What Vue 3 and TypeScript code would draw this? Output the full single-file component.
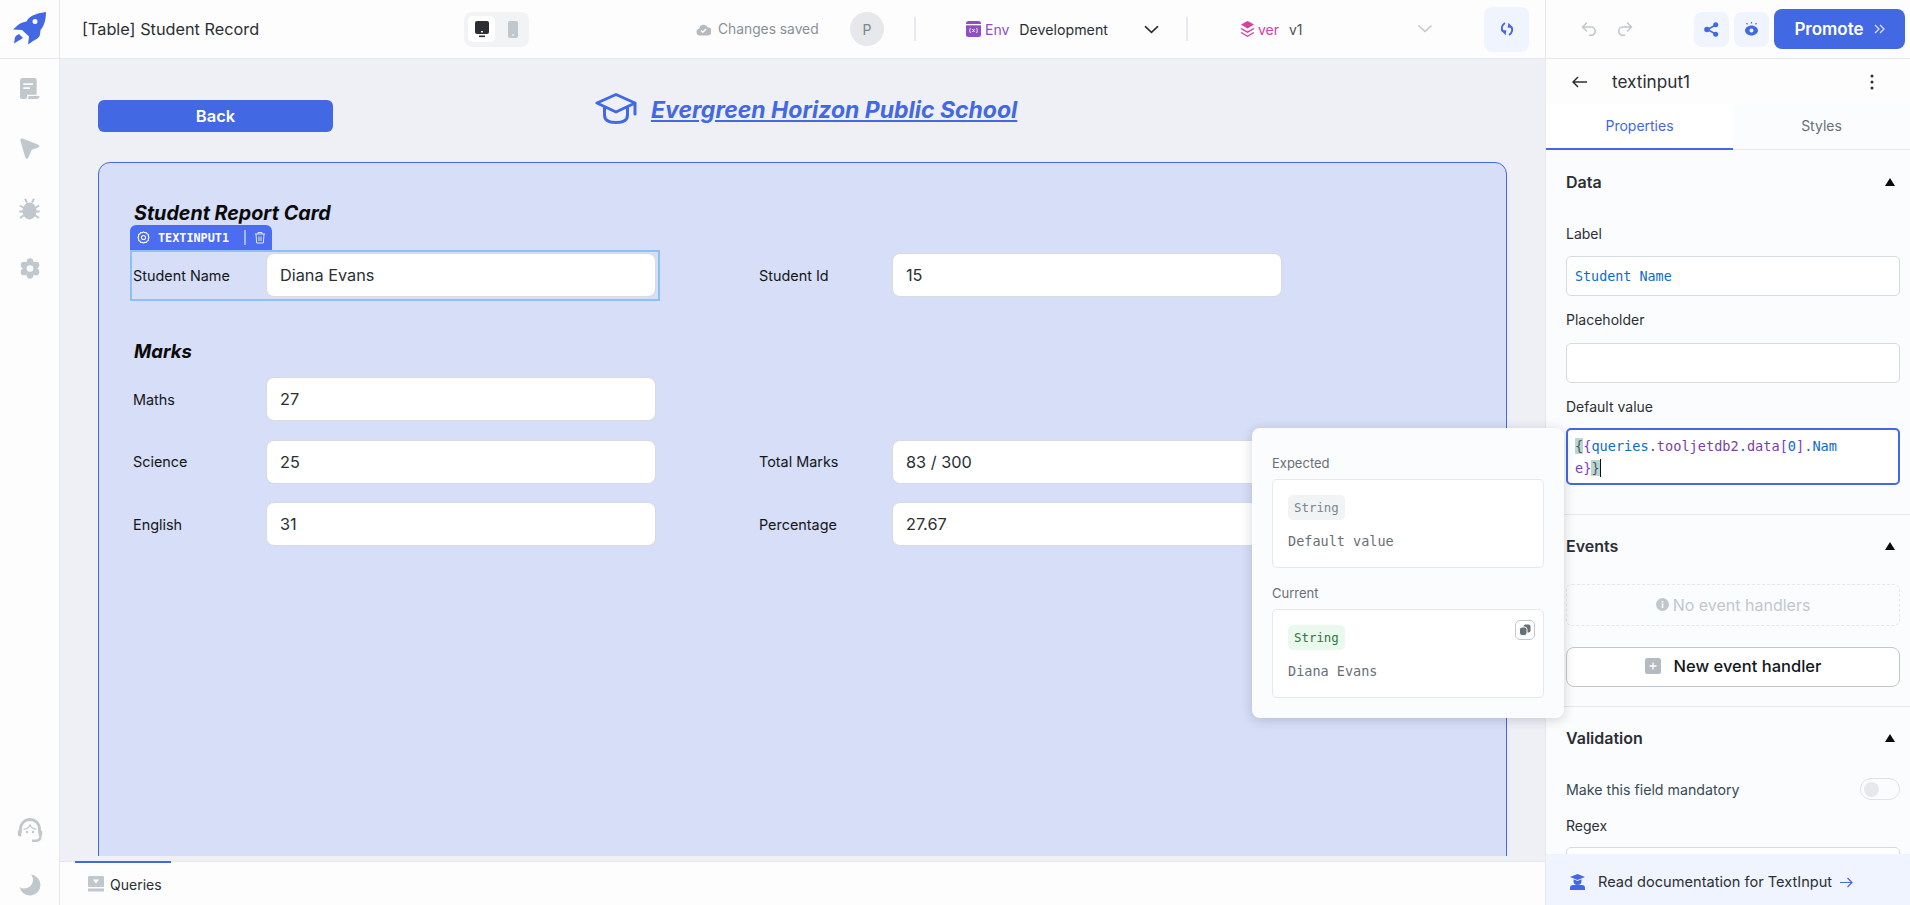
<script setup lang="ts">
interface Field { label: string; value: string }
const leftMarks: Field[] = [
  { label: 'Maths', value: '27' },
  { label: 'Science', value: '25' },
  { label: 'English', value: '31' },
]
const rightMarks: (Field | null)[] = [
  null,
  { label: 'Total Marks', value: '83 / 300' },
  { label: 'Percentage', value: '27.67' },
]
const railTop = ['doc', 'cursor', 'bug', 'gear']
const gearLobes = [0, 60, 120, 180, 240, 300].map((deg) => ({
  x: 10 + 6.8 * Math.cos((deg * Math.PI) / 180 - Math.PI / 2),
  y: 10.5 + 6.8 * Math.sin((deg * Math.PI) / 180 - Math.PI / 2),
}))
</script>

<template>
  <div class="app">
    <header class="topbar">
      <div class="logo-cell">
        <svg width="34" height="33" viewBox="0 0 34 33"><path fill="#4368e3" fill-rule="evenodd" d="M33 0C25 1 19 3 15 7L13.500 9.500C10.500 10 7 11 5 13L0 17.500 9 18 16 24.500 15 32.500 20 29C24 27 27 25 27 22L27.500 18C31 14 33 8 33 0ZM22 7a2.500 2.500 0 1 0 0 5 2.500 2.500 0 0 0 0-5Z"/><path fill="#4368e3" d="M1 31.500 2 25Q4 23 6 22L10 26Z"/></svg>
      </div>
      <div class="app-title">[Table] Student Record</div>
      <div class="device-switch">
        <span class="device active"><svg width="14" height="17" viewBox="0 0 14 17"><rect width="14" height="13" y="0" rx="2" fill="#2b2f33"/><rect x="6" y="10" width="2" height="1.400" fill="#fff"/><rect x="4" y="14.500" width="6" height="1.600" fill="#2b2f33"/></svg></span>
        <span class="device"><svg width="10" height="17" viewBox="0 0 10 17"><rect width="10" height="17" rx="2" fill="#c1c8cd"/><rect x="4" y="13.500" width="2" height="1" fill="#fff"/></svg></span>
      </div>
      <div class="saved">
        <svg width="15" height="13" viewBox="0 0 15 13"><path fill="#b4babf" d="M4 12.500a3.600 3.600 0 0 1-.7-7.100A4.400 4.400 0 0 1 11.600 4.300 3.200 3.200 0 0 1 11.500 12.500Z"/><path d="M5 7.500l1.800 1.800L10 6" fill="none" stroke="#fff" stroke-width="1.400"/></svg>
        <span>Changes saved</span>
      </div>
      <div class="avatar">P</div>
      <div class="vline first"></div>
      <div class="env">
        <svg width="15" height="16" viewBox="0 0 15 16"><rect width="15" height="16" rx="2.500" fill="#8e4ec6"/><rect y="3" width="15" height="1.300" fill="#fff"/><path d="M4.500 7c-1 1.500-1 3.500 0 5M10.500 7c1 1.500 1 3.500 0 5M6.300 8l2.400 3M8.700 8l-2.400 3" fill="none" stroke="#fff" stroke-width=".9"/></svg>
        <span class="env-name">Env</span>
        <span class="env-value">Development</span>
        <svg class="chev" width="15" height="9" viewBox="0 0 16 9"><path d="M1.500 1.500 8 7.500l6.500-6" fill="none" stroke="#2b2f33" stroke-width="1.700" stroke-linecap="round"/></svg>
      </div>
      <div class="vline"></div>
      <div class="ver">
        <svg width="15" height="18" viewBox="0 0 15 18"><path fill="#d6409f" d="M7.500 1 14 4.600 7.500 8.400 1 4.600Z"/><path d="M1 8.500l6.500 3.600L14 8.500M1 12.500l6.500 3.800 6.500-3.800" fill="none" stroke="#d6409f" stroke-width="1.400"/></svg>
        <span class="ver-name">ver</span>
        <span class="ver-value">v1</span>
        <svg class="chev2" width="14" height="8" viewBox="0 0 14 8"><path d="M1 1l6 5.500L13 1" fill="none" stroke="#c1c8cd" stroke-width="1.600" stroke-linecap="round"/></svg>
      </div>
      <button class="sync"><svg width="14" height="14" viewBox="0 0 14 14"><path d="M5 1C1.800 3 .8 6.500 3 9.500" fill="none" stroke="#4368e3" stroke-width="1.900"/><path d="M.8 8.200 6.300 8.300 5.600 13.300Z" fill="#4368e3"/><path d="M9 13C12.200 11 13.200 7.500 11 4.500" fill="none" stroke="#4368e3" stroke-width="1.900"/><path d="M13.200 5.800 7.700 5.700 8.400 .7Z" fill="#4368e3"/></svg></button>
      <div class="top-right">
        <svg class="undo" width="16" height="14" viewBox="0 0 16 14"><path d="M5.500 1 1.500 5l4 4M1.500 5H10a4.200 4.200 0 0 1 0 8.400H8.500" fill="none" stroke="#c1c8cd" stroke-width="1.600" stroke-linecap="round" stroke-linejoin="round"/></svg>
        <svg class="redo" width="16" height="14" viewBox="0 0 16 14"><path d="M10.500 1l4 4-4 4M14.500 5H6a4.200 4.200 0 0 0 0 8.400H7.500" fill="none" stroke="#c1c8cd" stroke-width="1.600" stroke-linecap="round" stroke-linejoin="round"/></svg>
        <button class="soft share"><svg width="15" height="15" viewBox="0 0 15 15"><path d="M11.500 3 3.500 7.500l8 4.500" fill="none" stroke="#4368e3" stroke-width="1.500"/><circle cx="11.700" cy="2.800" r="2.500" fill="#4368e3"/><circle cx="3" cy="7.500" r="2.800" fill="#4368e3"/><circle cx="11.700" cy="12.200" r="2.500" fill="#4368e3"/></svg></button>
        <button class="soft eye"><svg width="15" height="14" viewBox="0 0 15 14"><path fill="#4368e3" fill-rule="evenodd" d="M7.500 3.500C11 3.500 14 6 14 8.500S11 13.500 7.500 13.500 1 11 1 8.500 4 3.500 7.500 3.500ZM7.500 6.500a2 2 0 1 0 0 4 2 2 0 0 0 0-4Z"/><path d="M7.500 0v1.600M2.500 1l1 1.400M12.500 1l-1 1.400" stroke="#4368e3" stroke-width="1.200"/></svg></button>
        <button class="promote">Promote<svg width="11" height="10" viewBox="0 0 11 10"><path d="M1 1l4 4-4 4M6 1l4 4-4 4" fill="none" stroke="#dfe6fb" stroke-width="1.200"/></svg></button>
      </div>
    </header>

    <div class="body">
      <nav class="rail">
        <div class="rail-top">
          <span v-for="i in railTop" :key="i" class="rail-icon">
            <svg v-if="i === 'doc'" width="20" height="22" viewBox="0 0 21 25" preserveAspectRatio="none"><path fill="#c1c8cd" fill-rule="evenodd" d="M3 0h12a2.500 2.500 0 0 1 2.500 2.500V19h-10v3a2 2 0 0 1-2 2H3a3 3 0 0 1-3-3V3a3 3 0 0 1 3-3ZM3.500 6v2h10V6Zm0 4.500v2h7v-2Z"/><path fill="#c1c8cd" d="M9 20.500h11.500c0 1.800-1 3.300-3 3.300H8.300c.5-1 .7-2 .7-3.300Z"/></svg>
            <svg v-else-if="i === 'cursor'" width="20" height="22" viewBox="0 0 20 22"><path fill="#c1c8cd" d="M2.500 .5 18 6.500C20 7.300 19.800 9 18 9.600L11.500 12 8.500 19.500C7.800 21.200 6 21.200 5.300 19.500L.5 3C0 1.200 1 0 2.500 .5Z"/></svg>
            <svg v-else-if="i === 'bug'" width="21" height="22" viewBox="0 0 21 22"><path d="M6 .8 8 4.500M15 .8 13 4.500M.8 7.500 5 10M20.200 7.500 16 10M.3 13.500H5M20.700 13.500H16M1 20l4-2.800M20 20l-4-2.800" fill="none" stroke="#c1c8cd" stroke-width="2"/><ellipse cx="10.500" cy="13" rx="7" ry="8.500" fill="#c1c8cd"/></svg>
            <svg v-else width="20" height="21" viewBox="0 0 20 21"><circle v-for="(l, n) in gearLobes" :key="n" :cx="l.x" :cy="l.y" r="3.400" fill="#c1c8cd"/><circle cx="10" cy="10.500" r="7.200" fill="#c1c8cd"/><circle cx="10" cy="10.500" r="3.300" fill="#fdfdfe"/></svg>
          </span>
        </div>
        <div class="rail-bottom">
          <span class="rail-icon"><svg width="26" height="25" viewBox="0 0 26 25"><path d="M3.500 15v-4a9.500 9.500 0 0 1 19 0v4" fill="none" stroke="#c1c8cd" stroke-width="2.800"/><path d="M6.500 11.500C9.500 11 12 9.500 13 7c1 2.500 3.500 4 6.500 4.500" fill="none" stroke="#c1c8cd" stroke-width="1.200"/><circle cx="10" cy="14" r="1.200" fill="#c1c8cd"/><circle cx="16" cy="14" r="1.200" fill="#c1c8cd"/><path d="M.8 12.500h3.500v6H3a2.200 2.200 0 0 1-2.200-2.200ZM25.200 12.500h-3.500v6H23a2.200 2.200 0 0 0 2.200-2.200Z" fill="#c1c8cd"/><path d="M23.500 18c0 3-1.500 4.800-5 4.800h-3.500" fill="none" stroke="#c1c8cd" stroke-width="2.400"/></svg></span>
          <span class="rail-icon moon"><svg width="22" height="22" viewBox="0 0 22 22"><path fill="#c1c8cd" d="M12 .5A10.500 10.500 0 1 1 .7 13c1.500 1 3 1.500 4.800 1.500A8.500 8.500 0 0 0 14 6c0-2-.8-4-2-5.500Z"/></svg></span>
        </div>
      </nav>

      <main class="center">
        <section class="canvas">
          <div class="page-head">
            <button class="back">Back</button>
            <div class="school">
              <svg width="42" height="32" viewBox="0 0 42 32"><path d="M2 10 21 1.500 40 10 21 19Z M9.500 14V22C9.500 27 14 29.500 21 29.500S32.500 27 32.500 22V14M40 10V21" fill="none" stroke="#4368e3" stroke-width="3" stroke-linejoin="round" stroke-linecap="round"/></svg>
              <a class="school-name">Evergreen Horizon Public School</a>
            </div>
          </div>
          <div class="card">
            <h2 class="card-title">Student Report Card</h2>
            <div class="form-grid first-row">
              <div class="selected">
                <div class="tag">
                  <svg width="13" height="13" viewBox="0 0 14 14"><path d="M7 1l1.300.8 1.700-.2.800 1.400 1.500.8-.2 1.700.9 1.500-.9 1.500.2 1.700-1.500.8-.8 1.400-1.700-.2L7 13l-1.300-.8-1.700.2-.8-1.400-1.500-.8.2-1.700L1 7l.9-1.500-.2-1.700 1.500-.8.8-1.400 1.700.2Z" fill="none" stroke="#fff" stroke-width="1.100"/><circle cx="7" cy="7" r="2.200" fill="none" stroke="#fff" stroke-width="1.100"/></svg>
                  <span class="tag-name">TEXTINPUT1</span>
                  <i class="tag-sep"></i>
                  <svg width="12" height="13" viewBox="0 0 12 13"><path d="M1 3h10M4 3V1.500h4V3M2 3l.7 9h6.600L10 3M5 5.500v4.500M7 5.500v4.500" fill="none" stroke="#dfe6fb" stroke-width="1"/></svg>
                </div>
              </div>
              <label class="lbl">Student Name</label>
              <div class="inp"><span>Diana Evans</span></div>
              <i></i>
              <label class="lbl">Student Id</label>
              <div class="inp"><span>15</span></div>
            </div>
            <h2 class="card-title marks">Marks</h2>
            <div class="form-grid marks-grid">
              <template v-for="(f, n) in leftMarks" :key="f.label">
                <label class="lbl">{{ f.label }}</label>
                <div class="inp"><span>{{ f.value }}</span></div>
                <i></i>
                <template v-if="rightMarks[n]">
                  <label class="lbl">{{ rightMarks[n]?.label }}</label>
                  <div class="inp"><span>{{ rightMarks[n]?.value }}</span></div>
                </template>
                <template v-else><i></i><i></i></template>
              </template>
            </div>
          </div>
        </section>
        <footer class="queries">
          <div class="q-tab">
            <svg width="16" height="16" viewBox="0 0 16 16"><rect width="16" height="11" rx="1" fill="#c1c8cd"/><path d="M5 3.500h6L8 7.500Z" fill="#fff"/><rect y="12.500" width="16" height="3" fill="#c1c8cd"/></svg>
            <span>Queries</span>
          </div>
        </footer>
      </main>

      <aside class="panel">
        <div class="panel-scroll">
          <div class="panel-head">
            <svg width="16" height="12" viewBox="0 0 16 12"><path d="M6 1 1 6l5 5M1 6h14" fill="none" stroke="#2b2f33" stroke-width="1.500"/></svg>
            <span class="cmp-name">textinput1</span>
            <svg class="kebab" width="4" height="16" viewBox="0 0 4 16"><circle cx="2" cy="2" r="1.500" fill="#2b2f33"/><circle cx="2" cy="8" r="1.500" fill="#2b2f33"/><circle cx="2" cy="14" r="1.500" fill="#2b2f33"/></svg>
          </div>
          <div class="tabs">
            <div class="tab on">Properties</div>
            <div class="tab">Styles</div>
          </div>
          <section class="sec data">
            <div class="sec-head"><b>Data</b><i class="tri"></i></div>
            <div class="f-label">Label</div>
            <div class="code-inp blue">Student Name</div>
            <div class="f-label">Placeholder</div>
            <div class="code-inp"></div>
            <div class="f-label dflt">Default value</div>
            <div class="code-box"><span class="br">{</span><span class="pu">{</span><span class="bl">queries</span><span class="pk">.</span><span class="pk">tooljetdb2</span><span class="bl">.</span><span class="pk">data</span><span class="pu">[</span><span class="bl">0</span><span class="pu">]</span><span class="bl">.Nam</span><br><span class="pu">e</span><span class="pu">}</span><span class="br">}</span><i class="caret"></i></div>
          </section>
          <section class="sec events">
            <div class="sec-head"><b>Events</b><i class="tri"></i></div>
            <div class="no-events"><svg width="13" height="13" viewBox="0 0 13 13"><circle cx="6.500" cy="6.500" r="6.500" fill="#c1c8cd"/><rect x="5.700" y="5.500" width="1.600" height="4.500" fill="#fff"/><rect x="5.700" y="3" width="1.600" height="1.600" fill="#fff"/></svg>No event handlers</div>
            <button class="new-event"><svg width="16" height="16" viewBox="0 0 16 16"><rect width="16" height="16" rx="2.500" fill="#b4babf"/><path d="M8 4.500v7M4.500 8h7" stroke="#fff" stroke-width="1.300"/></svg>New event handler</button>
          </section>
          <section class="sec valid">
            <div class="sec-head"><b>Validation</b><i class="tri"></i></div>
            <div class="toggle-row"><span>Make this field mandatory</span><i class="toggle"><i></i></i></div>
            <div class="f-label regex">Regex</div>
            <div class="code-inp"></div>
          </section>
        </div>
        <div class="doc-foot">
          <svg width="15" height="16" viewBox="0 0 15 16"><path fill="#4368e3" d="M7.500 0 15 3 7.500 6 0 3ZM3.500 5.300l4 1.600 4-1.600V7a4 4 0 0 1-8 0ZM3 11h9a3 3 0 0 1 3 3v2H0v-2a3 3 0 0 1 3-3Z"/></svg>
          <span>Read documentation for TextInput</span>
          <svg width="14" height="11" viewBox="0 0 14 11"><path d="M8.500 1 13 5.500 8.500 10M13 5.500H1" fill="none" stroke="#4368e3" stroke-width="1.200"/></svg>
        </div>
      </aside>

      <div class="popover">
        <div class="pop-label">Expected</div>
        <div class="pop-box">
          <span class="badge grey">String</span>
          <div class="pop-val">Default value</div>
        </div>
        <div class="pop-label cur">Current</div>
        <div class="pop-box">
          <span class="badge green">String</span>
          <div class="pop-val">Diana Evans</div>
          <span class="copy"><svg width="12" height="12" viewBox="0 0 12 12"><rect x="4.500" y="0.500" width="7" height="8" rx="2" fill="#687076"/><rect x="0.500" y="3" width="7.500" height="8.500" rx="2.500" fill="#687076" stroke="#fff"/></svg></span>
        </div>
      </div>
    </div>
  </div>
</template>

<style scoped>
.app { position: relative; width: 1910px; height: 905px; overflow: hidden; background: #fbfcfd; font-family: Inter, "Noto Sans", sans-serif; color: #2b2f33; display: flex; flex-direction: column; font-size: 14px; }
button { font-family: inherit; border: 0; padding: 0; cursor: pointer; }
h2 { margin: 0; }
.topbar { height: 59px; flex: none; display: flex; align-items: center; background: #fdfdfe; border-bottom: 1px solid #e6e8eb; box-sizing: border-box; }
.logo-cell { width: 60px; height: 58px; box-sizing: border-box; flex: none; border-right: 1px solid #e6e8eb; padding: 12px 0 0 13px; }
.app-title { width: 382px; padding-left: 22px; font-size: 16.300px; flex: none; box-sizing: border-box; color: #2b2f33; }
.device-switch { width: 65px; height: 35px; margin-left: 22px; flex: none; background: #f1f3f5; border-radius: 8px; display: flex; align-items: center; padding-left: 4px; box-sizing: border-box; gap: 4px; }
.device { width: 27px; height: 26px; border-radius: 5px; display: flex; align-items: center; justify-content: center; }
.device.active { background: #fff; }
.saved { margin-left: 167px; flex: none; width: 154px; display: flex; align-items: center; gap: 7px; color: #889096; font-size: 13.800px; }
.avatar { width: 34px; height: 34px; flex: none; border-radius: 50%; background: #e6e8eb; color: #7e868c; display: flex; align-items: center; justify-content: center; font-size: 14px; }
.vline { width: 2px; height: 24px; background: #e6e8eb; flex: none; }
.vline.first { margin-left: 30px; }
.env { flex: none; width: 270px; box-sizing: border-box; padding-left: 50px; display: flex; align-items: center; }
.env-name { color: #8e4ec6; margin-left: 4px; font-size: 14px; }
.env-value { margin-left: 10px; width: 125px; font-size: 14.200px; }
.ver { flex: none; width: 296px; box-sizing: border-box; padding-left: 52px; display: flex; align-items: center; }
.ver-name { color: #d6409f; margin-left: 3px; width: 31px; font-size: 14px; }
.ver-value { width: 129px; color: #4c5155; font-size: 14px; }
.sync { width: 45px; height: 45px; flex: none; border-radius: 8px; background: #f0f4ff; display: flex; align-items: center; justify-content: center; }
.top-right { width: 365px; height: 58px; margin-left: 16px; flex: none; box-sizing: border-box; border-left: 1px solid #e6e8eb; display: flex; align-items: center; padding-left: 35px; }
.redo { margin-left: 20px; }
.soft { width: 35px; height: 35px; border-radius: 8px; background: #f0f4ff; display: flex; align-items: center; justify-content: center; }
.share { margin-left: 61px; }
.eye { margin-left: 5px; }
.promote { width: 131px; height: 40px; margin-left: 5px; background: #4368e3; color: #fff; border-radius: 8px; font-weight: 600; font-size: 17px; display: flex; align-items: center; justify-content: center; gap: 10px; }

.body { flex: 1; min-height: 0; display: flex; }
.rail { width: 60px; flex: none; box-sizing: border-box; border-right: 1px solid #e6e8eb; background: #fdfdfe; display: flex; flex-direction: column; justify-content: space-between; align-items: center; padding: 17px 0 8px; }
.rail-top { display: flex; flex-direction: column; gap: 35px; }
.rail-bottom { display: flex; flex-direction: column; align-items: center; gap: 29px; }
.rail-icon { height: 25px; display: flex; align-items: center; justify-content: center; }
.center { width: 1485px; flex: none; display: flex; flex-direction: column; }
.canvas { flex: 1; min-height: 0; background: #eef0f6; overflow: hidden; padding: 34px 38px 0 38px; }
.page-head { height: 69px; position: relative; display: flex; }
.back { width: 235px; height: 32px; margin-top: 7px; background: #4368e3; color: #fff; font-size: 16.500px; font-weight: 600; border-radius: 6px; }
.school { margin-left: 262px; display: flex; align-items: flex-start; gap: 14px; }
.school-name { font-size: 23px; font-weight: 700; font-style: italic; color: #4368e3; text-decoration: underline; line-height: 32px; margin-top: 1px; white-space: nowrap; }
.card { height: 760px; box-sizing: border-box; background: #d7def7; border: 1px solid #4368e3; border-radius: 12px; padding: 37px 0 0 32px; }
.card-title { font-size: 19.700px; font-weight: 700; font-style: italic; color: #0a0a0a; line-height: 26px; padding-left: 3px; }
.card-title.marks { margin-top: 41px; font-size: 18.500px; }
.form-grid { display: grid; grid-template-columns: 133px 390px 103px 133px 390px; align-items: center; position: relative; padding-left: 2px; }
.first-row { margin-top: 27px; height: 44px; }
.marks-grid { margin-top: 13px; grid-auto-rows: 44px; row-gap: 18.500px; }
.lbl { font-size: 14.400px; color: #141618; font-weight: 400; }
.inp { height: 44px; box-sizing: border-box; background: #fff; border: 1px solid #d7dbdf; border-radius: 8px; padding: 0 13px; display: flex; align-items: center; font-size: 16.300px; color: #2b2f33; }
.selected { position: absolute; left: -1px; top: -3px; width: 530px; height: 51px; box-sizing: border-box; border: 2px solid #8cc0f7; pointer-events: none; }
.tag { position: absolute; left: -2px; top: -27px; width: 142px; height: 25px; background: #4d6df0; border-radius: 6px 6px 0 0; display: flex; align-items: center; padding-left: 7px; box-sizing: border-box; color: #fff; }
.tag-name { font-family: "DejaVu Sans Mono", monospace; font-weight: 700; font-size: 11.800px; margin-left: 8px; width: 86px; }
.tag-sep { width: 1.500px; height: 15px; background: #a6b6f7; margin: 0 8px 0 0; flex: none; }

.queries { height: 49px; flex: none; background: #eef0f6; box-sizing: border-box; padding-top: 5px; }
.q-tab { height: 44px; background: #fdfdfe; border-top: 1px solid #e6e8eb; display: flex; align-items: center; padding-left: 28px; gap: 6px; font-size: 14px; position: relative; }
.q-tab::before { content: ""; position: absolute; left: 15px; top: -1px; width: 96px; height: 2px; background: #4368e3; }

.panel { width: 365px; flex: none; box-sizing: border-box; border-left: 1px solid #e6e8eb; background: #fbfcfd; display: flex; flex-direction: column; }
.panel-scroll { flex: 1; min-height: 0; overflow: hidden; }
.panel-head { height: 45px; display: flex; align-items: center; padding-left: 26px; background: #fdfdfe; }
.cmp-name { margin-left: 24px; font-size: 17.200px; }
.kebab { margin-left: auto; margin-right: 36px; }
.tabs { display: flex; height: 46px; border-bottom: 1px solid #e6e8eb; box-sizing: border-box; }
.tab { flex: 1; text-align: center; line-height: 44px; color: #687076; font-size: 14px; }
.tab.on { flex: none; width: 187px; background: #fff; color: #4368e3; border-bottom: 2px solid #4368e3; height: 46px; box-sizing: border-box; }
.sec { padding: 0 10px 0 20px; border-bottom: 1px solid #e6e8eb; }
.sec-head { display: flex; justify-content: space-between; align-items: center; height: 24px; font-size: 16px; color: #2b2f33; }
.sec-head b { font-weight: 600; }
.tri { width: 0; height: 0; border: 5px solid transparent; border-top: 0; border-bottom: 8px solid #0a0a0a; margin-right: 5px; }
.data { padding-top: 20px; height: 365px; box-sizing: border-box; }
.f-label { color: #2b2f33; font-size: 14px; line-height: 20px; margin: 30px 0 12px; }
.code-inp + .f-label { margin: 14px 0 13px; }
.code-inp + .f-label.dflt { margin-bottom: 11px; }
.code-inp { height: 40px; box-sizing: border-box; background: #fff; border: 1px solid #d7dbdf; border-radius: 5px; padding: 0 8px; line-height: 40px; font-family: "DejaVu Sans Mono", monospace; font-size: 13.400px; }
.blue { color: #0b6bcb; }
.code-box { height: 57px; box-sizing: border-box; background: #fff; border: 2px solid #4368e3; border-radius: 5px; padding: 5px 7px; line-height: 22px; font-family: "DejaVu Sans Mono", monospace; font-size: 13.600px; }
.br { background: #b7d7d3; color: #555; }
.pu { color: #7a3ec4; }
.bl { color: #0b6bcb; }
.pk { color: #7b3fa0; }
.caret { display: inline-block; width: 1px; height: 18px; background: #111; vertical-align: -4px; }
.events { padding-top: 19px; height: 192px; box-sizing: border-box; }
.no-events { height: 42px; margin-top: 26px; box-sizing: border-box; border: 1px dashed #e6e8eb; border-radius: 6px; display: flex; align-items: center; justify-content: center; gap: 4px; color: #c1c8cd; font-size: 16px; padding-bottom: 1px; }
.new-event { width: 100%; height: 40px; margin-top: 21px; background: #fff; border: 1px solid #c1c8cd; border-radius: 8px; display: flex; align-items: center; justify-content: center; gap: 13px; color: #11181c; font-size: 16.500px; font-weight: 500; padding-bottom: 2px; }
.valid { padding-top: 19px; border-bottom: 0; }
.toggle-row { display: flex; justify-content: space-between; align-items: center; margin-top: 28px; height: 22px; color: #384a54; font-size: 14.200px; }
.toggle { width: 40px; height: 22px; box-sizing: border-box; border: 1px solid #dfe3e6; border-radius: 11px; padding: 3px; }
.toggle i { display: block; width: 15px; height: 15px; border-radius: 50%; background: #e6e8eb; }
.f-label.regex { margin: 16px 0 11px; }
.doc-foot { height: 51px; flex: none; box-sizing: border-box; background: #f0f4ff; display: flex; align-items: center; padding: 5px 0 0 24px; font-size: 14.600px; color: #2b2f33; }
.doc-foot span { margin: 0 7px 0 13px; }

.popover { position: absolute; left: 1252px; top: 428px; width: 312px; height: 290px; box-sizing: border-box; background: #fbfcfd; border-radius: 8px; box-shadow: 0 2px 12px rgba(16, 24, 40, .18); padding: 25px 20px 0 20px; }
.pop-label { font-size: 13px; line-height: 20px; color: #687076; margin-bottom: 6px; }
.pop-label.cur { margin-top: 15px; }
.pop-box { position: relative; height: 89px; box-sizing: border-box; background: #fff; border: 1px solid #e6e8eb; border-radius: 5px; padding: 15px 15px 0 15px; }
.badge { display: inline-block; height: 25px; line-height: 25px; padding: 0 6px; border-radius: 5px; font-family: "DejaVu Sans Mono", monospace; font-size: 12.400px; }
.badge.grey { background: #f1f3f5; color: #7e868c; }
.badge.green { background: #e9f9ee; color: #2b7a3e; }
.pop-val { margin-top: 12px; font-family: "DejaVu Sans Mono", monospace; font-size: 13.500px; line-height: 18px; color: #687076; }
.copy { position: absolute; right: 8px; top: 10px; width: 20px; height: 20px; box-sizing: border-box; border: 1px solid #c1c8cd; border-radius: 5px; background: #fff; display: flex; align-items: center; justify-content: center; }
</style>
